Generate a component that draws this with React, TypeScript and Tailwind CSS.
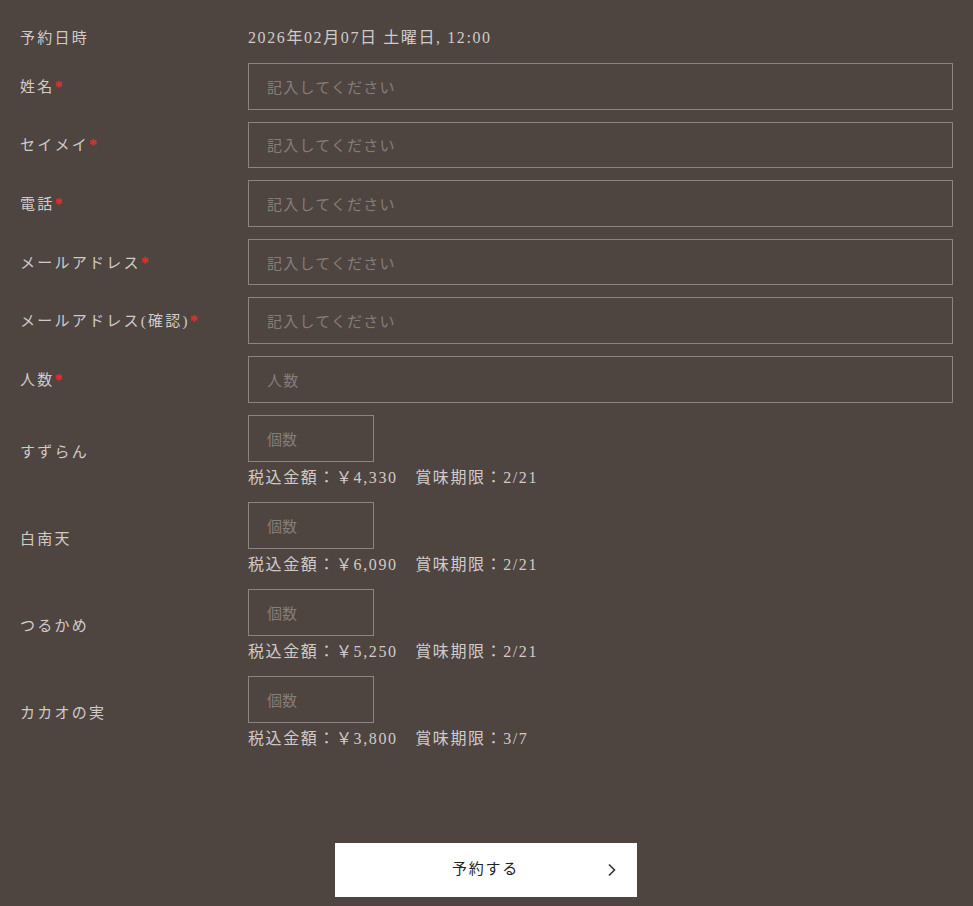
import React from 'react';

/**
 * 予約フォーム行データ
 */
interface TextField {
  label: string;
  placeholder: string;
}

interface ProductField {
  name: string;
  price: string;
  limit: string;
}

const textFields: TextField[] = [
  { label: '姓名', placeholder: '記入してください' },
  { label: 'セイメイ', placeholder: '記入してください' },
  { label: '電話', placeholder: '記入してください' },
  { label: 'メールアドレス', placeholder: '記入してください' },
  { label: 'メールアドレス(確認)', placeholder: '記入してください' },
  { label: '人数', placeholder: '人数' },
];

const products: ProductField[] = [
  { name: 'すずらん', price: '4,330', limit: '2/21' },
  { name: '白南天', price: '6,090', limit: '2/21' },
  { name: 'つるかめ', price: '5,250', limit: '2/21' },
  { name: 'カカオの実', price: '3,800', limit: '3/7' },
];

const serif = "font-['Liberation_Serif','Noto_Sans_CJK_JP',serif]";

export default function App() {
  return (
    <div className={`min-h-[906px] w-full bg-[#4e4541] text-[#d0cbc8] ${serif}`}>
      <div className="flex flex-col pl-5 pr-5 pt-[26px]">
        {/* 予約日時 */}
        <div className="flex items-center h-[24px]">
          <div className="w-[228px] shrink-0 text-[15px] tracking-[0.15em]">予約日時</div>
          <div className="text-[16px] tracking-[0.1em]">2026年02月07日 土曜日, 12:00</div>
        </div>

        {/* テキスト入力 */}
        <div className="flex flex-col gap-[12px] mt-[13px]">
          {textFields.map((f) => (
            <div key={f.label} className="flex items-center">
              <div className="w-[228px] shrink-0 text-[15px] tracking-[0.15em] pt-[1px]">
                {f.label}
                <span className="text-[#ee2b2b] font-bold text-[16px]">*</span>
              </div>
              <input
                className="flex-1 h-[46.6px] border border-[#8a8582] bg-transparent px-[18px] text-[15px] tracking-[0.08em] font-['Noto_Sans_CJK_JP',sans-serif] placeholder:text-[#857d79] outline-none"
                placeholder={f.placeholder}
              />
            </div>
          ))}
        </div>

        {/* 商品 */}
        <div className="flex flex-col gap-[13px] mt-[12px]">
          {products.map((p) => (
            <div key={p.name} className="flex items-center">
              <div className="w-[228px] shrink-0 text-[15px] tracking-[0.15em] pt-[1px]">{p.name}</div>
              <div className="flex flex-col">
                <input
                  className="w-[126px] h-[47px] border border-[#8a8582] bg-transparent px-[18px] text-[15px] font-['Noto_Sans_CJK_JP',sans-serif] placeholder:text-[#857d79] outline-none"
                  placeholder="個数"
                />
                <div className="mt-[5px] text-[16px] leading-[22px] tracking-[0.1em] whitespace-pre">
                  {`税込金額：￥${p.price}　賞味期限：${p.limit}`}
                </div>
              </div>
            </div>
          ))}
        </div>

        {/* 送信ボタン */}
        <div className="flex justify-center mt-[93px] pr-[2px]">
          <button className="relative w-[302px] h-[54px] bg-white text-[#222] text-[15px] tracking-[0.12em] flex items-center justify-center">
            予約する
            <svg
              className="absolute right-[20px] top-1/2 -translate-y-1/2"
              width="10"
              height="14"
              viewBox="0 0 10 14"
              fill="none"
              stroke="#333"
              strokeWidth="1.6"
            >
              <path d="M2 1.5 L7.5 7 L2 12.5" />
            </svg>
          </button>
        </div>
      </div>
    </div>
  );
}
